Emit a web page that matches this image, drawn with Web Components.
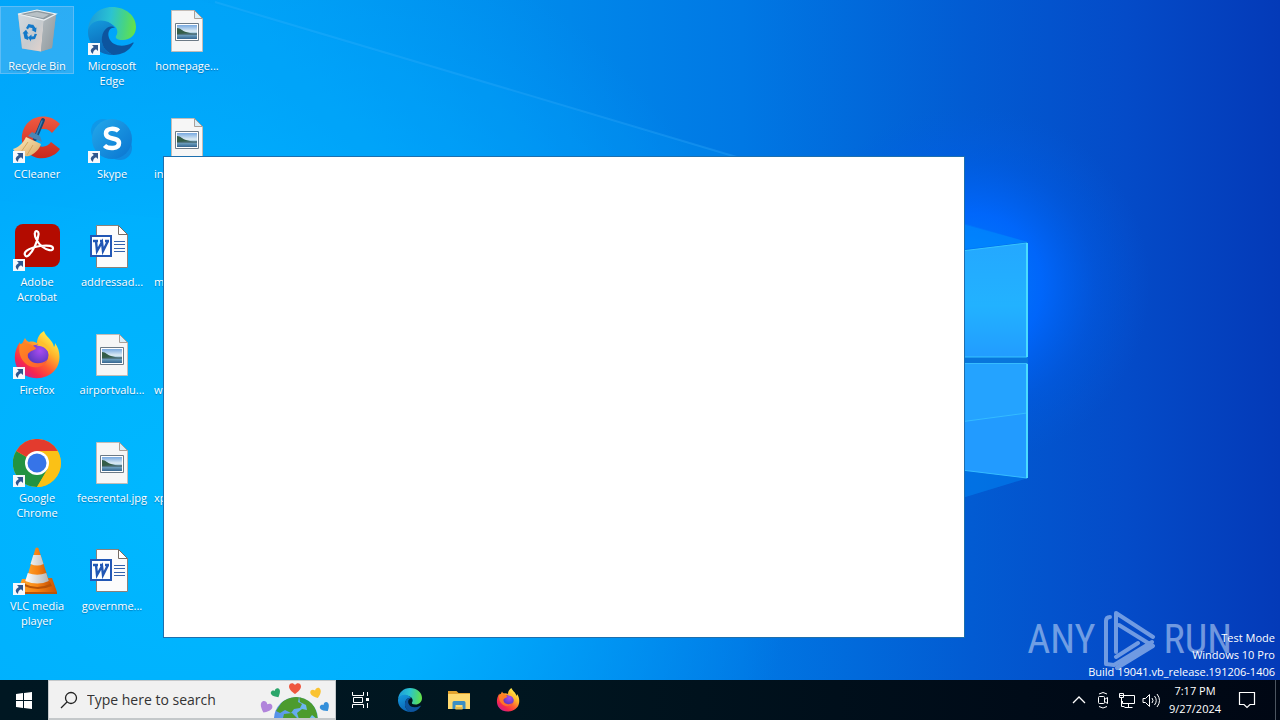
<!DOCTYPE html>
<html lang="en">
<head>
<meta charset="utf-8">
<title>Desktop</title>
<style>
	html, body {
		height: 100%;
		margin: 0;
		overflow: hidden;
		font-family: "Open Sans", "Noto Sans", sans-serif;
		font-size: 11px;
		color: #fff;
	}
</style>
</head>
<body>
<win-shell>
	<win-wallpaper slot="wallpaper"></win-wallpaper>
	<desktop-item icon="bin" selected>Recycle Bin</desktop-item>
	<desktop-item icon="ccleaner" shortcut>CCleaner</desktop-item>
	<desktop-item icon="acrobat" shortcut>Adobe Acrobat</desktop-item>
	<desktop-item icon="firefox" shortcut>Firefox</desktop-item>
	<desktop-item icon="chrome" shortcut>Google Chrome</desktop-item>
	<desktop-item icon="vlc" shortcut>VLC media player</desktop-item>
	<desktop-item icon="edge" shortcut>Microsoft Edge</desktop-item>
	<desktop-item icon="skype" shortcut>Skype</desktop-item>
	<desktop-item icon="word">addressad...</desktop-item>
	<desktop-item icon="image">airportvalu...</desktop-item>
	<desktop-item icon="image">feesrental.jpg</desktop-item>
	<desktop-item icon="word">governme...</desktop-item>
	<desktop-item icon="image">homepage...</desktop-item>
	<desktop-item icon="image" start>in</desktop-item>
	<desktop-item icon="image" start>m</desktop-item>
	<desktop-item icon="image" start>w</desktop-item>
	<desktop-item icon="image" start>xp</desktop-item>
	<app-window slot="windows"></app-window>
	<run-watermark slot="marks"></run-watermark>
	<build-info slot="marks">
		<div>Test Mode</div>
		<div>Windows 10 Pro</div>
		<div>Build 19041.vb_release.191206-1406</div>
	</build-info>
	<task-bar slot="taskbar">
		<task-button icon="start" label="Start"></task-button>
		<search-box placeholder="Type here to search"></search-box>
		<task-button icon="taskview" label="Task View"></task-button>
		<task-button icon="edge" label="Microsoft Edge"></task-button>
		<task-button icon="explorer" label="File Explorer"></task-button>
		<task-button icon="firefox" label="Firefox"></task-button>
		<task-button slot="tray" icon="chevron" label="Show hidden icons" small></task-button>
		<task-button slot="tray" icon="meet" label="Meet Now" small></task-button>
		<task-button slot="tray" icon="network" label="Network" small></task-button>
		<task-button slot="tray" icon="volume" label="Volume" small></task-button>
		<tray-clock slot="tray" time="7:17 PM" date="9/27/2024"></tray-clock>
		<task-button slot="tray" icon="notify" label="Notifications"></task-button>
	</task-bar>
</win-shell>

<script>
// every picture, drawn on a 48 unit grid for apps and a 24 unit grid for glyphs
const ART = {
	bin: `<svg viewBox="0 0 48 48">
		<defs>
			<linearGradient id="l" x2="1" y2="1"><stop stop-color="#d3dadf"/><stop offset=".55" stop-color="#c6cbcf"/><stop offset="1" stop-color="#e5d3cb"/></linearGradient>
			<linearGradient id="r" x2="1" y2="1"><stop stop-color="#b5bcc0"/><stop offset="1" stop-color="#8f989d"/></linearGradient>
		</defs>
		<path d="M5 7 24 3l19 4-4 34-11 3.500L9 41.500z" fill="#8ba0ac"/>
		<path d="M5 7 31 13l-3 31.500L9 41.500z" fill="url(#l)"/>
		<path d="M31 13 43 7l-4 34-11 3.500z" fill="url(#r)"/>
		<path d="M7 7.300 24 4l17 3-10 5z" fill="#8e999f"/>
		<path d="M11 7.500 24 5l12 2.500-6 3.500z" fill="#b8c1c6"/>
		<path d="M5 7 24 3l19 4-12 6z" fill="none" stroke="#eef2f4" stroke-width="1.200"/>
		<g fill="#1379c9">
			<path d="m13 21 2.500-4 4.500 1-1 3-3-.5-1 2z"/>
			<path d="m20 17.500 2.500 3.500 1-.6-.5 5-4.500-2.300 1.300-.8-2-3z"/>
			<path d="m24 27-2 5-4 .5v2l-3-4 3.500-3v2l2.300-.2.800-2.500z"/>
			<path d="m15 33-3.500-1.500-1-5-1-.3 3.500-3.500 2.500 4-1.500-.2.800 3 1 .6z"/>
		</g>
	</svg>`,
	ccleaner: `<svg viewBox="0 0 48 48">
		<defs>
			<linearGradient id="c" x2="0" y2="1"><stop stop-color="#ee5a42"/><stop offset="1" stop-color="#c9281c"/></linearGradient>
			<linearGradient id="b" x2="1" y2="1"><stop stop-color="#fff0c4"/><stop offset="1" stop-color="#d9a762"/></linearGradient>
		</defs>
		<path d="M47 9C35-4 12 0 9 20c-2 17 13 27 27 22 6-2 9-5 11-8l-9-7c-4 6-12 6-15 1-5-7 0-15 8-14 4 0 6 2 8 4z" fill="url(#c)"/>
		<path d="M30 5 22 24" stroke="#174a78" stroke-width="4" stroke-linecap="round"/>
		<path d="M29 6 22 23" stroke="#3f7fb4" stroke-width="1.500" stroke-linecap="round"/>
		<path d="m19 17 8 4 2 6-14-6z" fill="#4a86b4"/>
		<path d="m13 22 15 7c-2 6-7 10-12 12C9 42 3 39 0 34c6-2 10-6 13-12z" fill="url(#b)"/>
		<path d="m15 27-7 10m12-7-6 10" stroke="#d5a65e" fill="none"/>
	</svg>`,
	acrobat: `<svg viewBox="0 0 48 48">
		<rect x="2" y="1" width="45" height="43" rx="8" fill="#b30b00"/>
		<path d="M12 32c-2-4 7-8 15-9 9-1 13 0 13 2.500 0 3-6 2-11-2-5-4-8-11-7-14 .6-2.500 4-1.500 3.500 2C25 18 20 28 16 32c-2 2-3.500 1.500-4 0z" fill="none" stroke="#fff" stroke-width="2.200"/>
	</svg>`,
	firefox: `<svg viewBox="0 0 48 48">
		<defs>
			<linearGradient id="f" x1=".85" y1=".1" x2=".2" y2=".95"><stop stop-color="#fff44f"/><stop offset=".3" stop-color="#ffb52b"/><stop offset=".58" stop-color="#ff5b32"/><stop offset=".82" stop-color="#f6264f"/><stop offset="1" stop-color="#c9228d"/></linearGradient>
			<radialGradient id="p" cx=".6" cy=".3" r=".8"><stop stop-color="#a94bef"/><stop offset="1" stop-color="#4a34b5"/></radialGradient>
			<linearGradient id="o" x2="1" y2="1"><stop stop-color="#ff8a20"/><stop offset="1" stop-color="#ff5c32"/></linearGradient>
		</defs>
		<path d="M31 0c1 5 9 9 10 16 1-1 1-3 1-4 6 8 6 20 0 27C32 51 12 49 5 38 0 30 1 19 7 11c0 2 0 3 .5 4C9 13 11 9 12 7c1 2 2 3 4 4 3-1 6 0 8 1 0-5 3-10 7-12z" fill="url(#f)"/>
		<circle cx="25" cy="24" r="10.500" fill="url(#p)"/>
		<path d="M7 13c5-2 12 0 16 4 0 2-4 2-6 4-3 2-3 4-1 7 3 5 12 6 18 1-3 8-15 10-22 3-5-5-7-12-5-19z" fill="url(#o)"/>
		<path d="M23 15c6-1 12 3 14 10 1-8-5-15-12-15 1 2 1 4-2 5z" fill="#ffc02f"/>
	</svg>`,
	chrome: `<svg viewBox="0 0 48 48">
		<circle cx="24" cy="24" r="24" fill="#fbc116"/>
		<path d="M24 24 3.200 12A24 24 0 0 0 24 48l11-18z" fill="#229342"/>
		<path d="M24 24 3.200 12A24 24 0 0 1 44.800 12H24z" fill="#e33b2e"/>
		<path d="M24 12.500h20.800A24 24 0 0 1 24 48l10.500-18z" fill="#fbc116"/>
		<circle cx="24" cy="24" r="12" fill="#fff"/>
		<circle cx="24" cy="24" r="9.500" fill="#3674e8"/>
	</svg>`,
	vlc: `<svg viewBox="0 0 48 48">
		<defs><linearGradient id="v" x2="1"><stop stop-color="#ffa52e"/><stop offset=".5" stop-color="#f78212"/><stop offset="1" stop-color="#c95505"/></linearGradient>
		<linearGradient id="w" x2="1"><stop stop-color="#fff"/><stop offset="1" stop-color="#b4b4b4"/></linearGradient></defs>
		<path d="m9 32 30-1 5 14H4z" fill="url(#v)"/>
		<path d="M4 45h40v2H4z" fill="#bc5406"/>
		<path d="M13 35q11 6 24 0l2 4q-14 6-28 0z" fill="#b85206"/>
		<path d="M22.500 1.500q1.500-2 3 0L37 37q-13 6-25 0z" fill="url(#v)"/>
		<path d="M20.300 8h7.300l2.900 9q-6 3-13 0zM14.800 26q9.500 3.500 18.500 0l2.500 8q-11 5-23.500 0z" fill="url(#w)"/>
	</svg>`,
	edge: `<svg viewBox="0 0 48 48">
		<defs>
			<linearGradient id="g" x1="0" y1=".5" x2="1" y2=".6"><stop stop-color="#1c9bd8"/><stop offset=".45" stop-color="#2bc3d2"/><stop offset=".75" stop-color="#46d484"/><stop offset="1" stop-color="#67e344"/></linearGradient>
			<linearGradient id="b" x2=".3" y2="1"><stop stop-color="#149bde"/><stop offset="1" stop-color="#0b67b7"/></linearGradient>
		</defs>
		<path d="M0 23C1 9 11 0 24 0c14 0 24 9 24 20 0 8-6 13-13 13-6 0-8-2-7-4 3-4 1-10-5-12C14 13 3 15 0 23z" fill="url(#g)"/>
		<path d="M0 23c2-7 9-11 17-9 5 1 8 4 10 7-7-3-13 3-13 12 0 8 6 14 13 15C12 49-1 38 0 23z" fill="url(#b)"/>
		<path d="M27 21c-5-1-8 4-6 10 3 8 14 10 23 5 2-1 2 0 1 1-4 7-11 11-20 11-9-4-12-11-11-18 1-8 8-13 13-9z" fill="#0d559f"/>
	</svg>`,
	skype: `<svg viewBox="0 0 48 48">
		<defs><linearGradient id="s" x2="1" y2="1"><stop stop-color="#23a9eb"/><stop offset="1" stop-color="#0a74d0"/></linearGradient></defs>
		<circle cx="15" cy="16" r="12" fill="#0f98e8"/>
		<circle cx="32" cy="33" r="12" fill="#0f8ae0"/>
		<circle cx="24" cy="24" r="20" fill="url(#s)"/>
		<path d="M30.500 16c-3-3-12.500-3.500-12.500 2.500 0 7 13 3 13 9.500 0 6.500-11 6-14.500 2.500" fill="none" stroke="#fff" stroke-width="4.500"/>
	</svg>`,
	image: `<svg viewBox="0 0 48 48">
		<defs><linearGradient id="k" x2="0" y2="1"><stop stop-color="#77a9e0"/><stop offset=".45" stop-color="#dcebf4"/><stop offset=".65" stop-color="#7baec9"/><stop offset="1" stop-color="#356590"/></linearGradient></defs>
		<path d="M8.500 3.500h23l8 8v33h-31z" fill="#f6f6f6" stroke="#c3bcb7"/>
		<path d="M31.500 3.500v8h8z" fill="#d9eef8" stroke="#a99f98"/>
		<path d="M12.500 16.500h23v17h-23z" fill="#fff" stroke="#6c7a86"/>
		<path d="M14 18h20v14H14z" fill="url(#k)"/>
		<path d="M14 21c4 0 5 3 9 4l8 2-17 1z" fill="#345d48"/>
		<path d="m14 27 20-1v2H14z" fill="#537784"/>
	</svg>`,
	word: `<svg viewBox="0 0 48 48">
		<path d="M8.500 2.500h22l9 9v33h-31z" fill="#fcfcfc" stroke="#8b817a"/>
		<path d="M30.500 2.500v9h9z" fill="#fff" stroke="#766d66"/>
		<path d="M26 18.500h11m-11 3h11m-11 4h11m-11 3h11" stroke="#3563ae"/>
		<path d="M3 13h20v20H3z" fill="#fff" stroke="#2257b5" stroke-width="2"/>
		<path d="M5 18h5m2 0h3m2 0h4M8 18l1 10 5-9 1 9 5-10" fill="none" stroke="#2257b5" stroke-width="2.400"/>
	</svg>`,
	arrow: `<svg viewBox="0 0 12 12">
		<path d="M0 0h12v12H0z" fill="#f5f8fc"/>
		<path d="M4 2h6v6L8 6.300Q5 7.500 5 11 0 7.500 5.800 4z" fill="#2f568e"/>
	</svg>`,
	explorer: `<svg viewBox="0 0 48 48">
		<path d="M2 6h17l4 4h23v32H2z" fill="#e4a52f"/>
		<path d="M2 12h44v30H2z" fill="#ffda70"/>
		<path d="M11 42V29q0-3 3-3h20q3 0 3 3v13h-6v-8H17v8z" fill="#3c8fc4"/>
		<path d="M17 38h14v5H17z" fill="#e9bd4c"/>
	</svg>`,
	start: `<svg viewBox="0 0 24 24">
		<path d="m4 6 7-1v7H4zm8-1 8-1v8h-8zM4 13h7v7l-7-1zm8 0h8v8l-8-1z" fill="#fff"/>
	</svg>`,
	taskview: `<svg viewBox="0 0 24 24" fill="none" stroke="#fff">
		<path d="M3.500 4v3.500h11V4M3.500 20v-3.500h11V20M4.500 9.500h9v5h-9zM18.500 4v4m0 7v5"/>
		<path d="M17 10h3v3h-3z" fill="#fff" stroke="none"/>
	</svg>`,
	chevron: `<svg viewBox="0 0 24 24"><path d="m6 15 6-6 6 6" fill="none" stroke="#fff" stroke-width="1.300"/></svg>`,
	meet: `<svg viewBox="0 0 24 24" fill="none" stroke="#fff">
		<rect x="7.500" y="8.500" width="6" height="7" rx="1"/>
		<path d="m13.500 11.500 3-2v6l-3-2M8 6q4-3 8 0M8 18.500q4 3 8 0"/>
	</svg>`,
	network: `<svg viewBox="0 0 24 24" fill="none" stroke="#fff">
		<path d="M9 7.500h10.500v8h-12V13M13.500 16v3M9.500 19.500h8M4.500 5.500h4v4h-4zM6.500 10v8.500h3M5 7.500h3"/>
	</svg>`,
	volume: `<svg viewBox="0 0 24 24" fill="none" stroke="#fff">
		<path d="M4 10.500h2.500l4-4v12l-4-4H4zM13 10q2 2.500 0 5M15.500 8q3.500 4.500 0 9M18 6q5 6.500 0 13"/>
	</svg>`,
	notify: `<svg viewBox="0 0 24 24"><path d="M4.500 4.500h15v12H15l-3 3-3-3H4.500z" fill="none" stroke="#fff" stroke-width="1.200"/></svg>`,
	search: `<svg viewBox="0 0 24 24" fill="none" stroke="#222" stroke-width="1.300"><circle cx="14" cy="10" r="5.500"/><path d="m10 14-6 6"/></svg>`,
	earth: `<svg viewBox="10 0 76 38">
		<defs>
			<clipPath id="e"><circle cx="47" cy="39" r="22"/></clipPath>
			<linearGradient id="n" x2="1"><stop stop-color="#548fe8"/><stop offset="1" stop-color="#79c8f4"/></linearGradient>
			<path id="h" d="M0 6C-3 4-6 1-6-1.500-6-5-2-6 0-3 2-6 6-5 6-1.500 6 1 3 4 0 6z"/>
		</defs>
		<circle cx="47" cy="39" r="22" fill="url(#n)"/>
		<g clip-path="url(#e)" fill="#4c9b2e">
			<path d="M33 22q8-6 17-5l-1 5 4 2-2 4-6 1-3 4-6-3-5 3-4-2z"/>
			<path d="M50 16q17 3 19 24l-6-5-3 4H50l-2-6 5-4 5 1-1-5-6-3z"/>
			<path d="m35 34 8-1 5 5H34z"/>
		</g>
		<g>
			<use href="#h" transform="translate(17 27) rotate(25)" fill="#b184db"/>
			<use href="#h" transform="translate(27 13) rotate(-30) scale(.8)" fill="#2ba56a"/>
			<use href="#h" transform="translate(46 8)" fill="#ef573f"/>
			<use href="#h" transform="translate(67 13) rotate(-20) scale(.9)" fill="#fac331"/>
			<use href="#h" transform="translate(76 27) rotate(-35) scale(.8)" fill="#348fda"/>
		</g>
	</svg>`,
};

class BaseElement extends HTMLElement {
	constructor() {
		super();
		this.attachShadow({mode: "open"});
	}
	connectedCallback() {
		this.shadowRoot.innerHTML = this.render();
	}
	attr(name) {
		return this.getAttribute(name) || "";
	}
}

class AppIcon extends BaseElement {
	render() {
		return `<style>
			:host { display: block; width: 48px; height: 48px; }
			svg { display: block; width: 100%; height: 100%; }
		</style>${ART[this.attr("name")]}`;
	}
}

class WinShell extends BaseElement {
	render() {
		return `<style>
			:host { display: flex; flex-direction: column; height: 100%; }
			main { position: relative; flex: 1; min-height: 0; overflow: hidden; }
			.icons {
				position: relative;
				display: grid;
				grid-auto-flow: column;
				grid-template-rows: repeat(6, 108px);
				grid-auto-columns: 75px;
				padding-top: 6px;
			}
		</style>
		<main>
			<slot name="wallpaper"></slot>
			<div class="icons"><slot></slot></div>
			<slot name="marks"></slot>
			<slot name="windows"></slot>
		</main>
		<slot name="taskbar"></slot>`;
	}
}

class WinWallpaper extends BaseElement {
	render() {
		return `<style>
			:host { position: absolute; inset: 0; }
			svg { display: block; width: 100%; height: 100%; }
		</style>
		<svg viewBox="0 0 1280 680" preserveAspectRatio="none">
			<defs>
				<linearGradient id="base">
					<stop stop-color="#00a6f8"/>
					<stop offset=".2" stop-color="#00a0f4"/>
					<stop offset=".4" stop-color="#008cec"/>
					<stop offset=".58" stop-color="#0078e4"/>
					<stop offset=".76" stop-color="#025bd2"/>
					<stop offset=".88" stop-color="#044bc8"/>
					<stop offset="1" stop-color="#043ab8"/>
				</linearGradient>
				<radialGradient id="cyan" gradientUnits="userSpaceOnUse" cx="180" cy="500" r="620">
					<stop stop-color="#00b8ff"/>
					<stop offset=".45" stop-color="#00b2ff" stop-opacity=".9"/>
					<stop offset="1" stop-color="#00a0ff" stop-opacity="0"/>
				</radialGradient>
				<radialGradient id="glow" gradientUnits="userSpaceOnUse" cx="970" cy="285" r="180">
					<stop stop-color="#0080ff"/>
					<stop offset=".4" stop-color="#0068ff" stop-opacity=".9"/>
					<stop offset=".7" stop-color="#005ff0" stop-opacity=".35"/>
					<stop offset="1" stop-color="#005ce0" stop-opacity="0"/>
				</radialGradient>
				<linearGradient id="pane" x2="0" y2="1">
					<stop stop-color="#24a8ff"/>
					<stop offset=".55" stop-color="#22b2ff"/>
					<stop offset="1" stop-color="#229cff"/>
				</linearGradient>
			</defs>
			<rect width="1280" height="680" fill="url(#base)"/>
			<rect width="1280" height="680" fill="url(#cyan)"/>
			<rect width="1280" height="680" fill="url(#glow)"/>
			<path d="M200 0 1028 242 900 300 0 200V0z" fill="#00a8ff" opacity=".14"/>
			<path d="M215 2 740 158" stroke="#42b8ff" stroke-width="2" opacity=".25"/>
			<path d="m900 207 128 35-128 14zM900 462l128 16-128 39z" fill="#0094ff" opacity=".4"/>
			<path d="M900 258 1028 242v236L900 462z" fill="#0876dc"/>
			<path d="M900 258.500 1027 243v114H900z" fill="url(#pane)" stroke="#35c4ff"/>
			<path d="M900 363.500h127V478L900 462.500z" fill="#229bff" stroke="#35bcff"/>
			<path d="M900 364h126v49l-126 17z" fill="#25acff" opacity=".5"/>
			<path d="m900 430 127-17" stroke="#34bcff"/>
			<path d="M1027 243v114m0 7v114" stroke="#4adcff" stroke-width="2"/>
		</svg>`;
	}
}

class DesktopItem extends BaseElement {
	render() {
		return `<style>
			:host { display: block; }
			.item {
				box-sizing: border-box;
				display: flex;
				flex-direction: column;
				align-items: center;
				gap: 3px;
				width: 74px;
				border: 1px solid transparent;
			}
			:host([selected]) .item { border-color: #5cbcf6; background: rgba(125, 190, 235, .35); }
			.picture { position: relative; }
			.badge { position: absolute; left: 0; bottom: 0; width: 12px; height: 12px; }
			.label {
				line-height: 15px;
				text-align: center;
				text-shadow: 0 1px 1px rgba(0, 40, 90, .4);
			}
			:host([start]) .label { align-self: flex-start; padding-left: 3px; }
		</style>
		<div class="item">
			<div class="picture">
				<app-icon name="${this.attr("icon")}"></app-icon>
				${this.hasAttribute("shortcut") ? '<app-icon class="badge" name="arrow"></app-icon>' : ""}
			</div>
			<div class="label"><slot></slot></div>
		</div>`;
	}
}

class AppWindow extends BaseElement {
	render() {
		return `<style>
			:host {
				box-sizing: border-box;
				position: absolute;
				left: 163px;
				top: 156px;
				width: 802px;
				height: 482px;
				border: 1px solid #1d6fae;
				background: #fff;
			}
		</style><slot></slot>`;
	}
}

class RunWatermark extends BaseElement {
	render() {
		return `<style>
			:host {
				position: absolute;
				right: 48px;
				bottom: 9px;
				display: flex;
				align-items: center;
				gap: 6px;
				font: 400 40px/60px "Roboto Condensed", "Open Sans Condensed", "Liberation Sans Narrow", "Roboto", sans-serif;
				color: #b8d0f4;
				opacity: .6;
			}
			svg { display: block; width: 56px; height: 62px; }
		</style>
		<span>ANY</span>
		<svg viewBox="0 0 56 62" fill="none" stroke="currentColor" stroke-width="4" stroke-linejoin="round" stroke-linecap="round">
			<path d="M8 8q-4 0-4 4v43l8 1 38-23M14 43V4l37 24M17 16l34 21-36 22M14 48l22-14"/>
		</svg>
		<span>RUN</span>`;
	}
}

class BuildInfo extends BaseElement {
	render() {
		return `<style>
			:host {
				position: absolute;
				right: 5px;
				bottom: 0;
				line-height: 17px;
				text-align: right;
			}
		</style><slot></slot>`;
	}
}

class TaskBar extends BaseElement {
	render() {
		return `<style>
			:host {
				display: flex;
				height: 40px;
				background: linear-gradient(90deg, #001722, #001620 40%, #000b18 80%, #000714);
			}
			.tray { display: flex; margin-left: auto; }
			.peek {
				width: 5px;
				margin-left: 8px;
				padding: 0;
				border: 0;
				border-left: 1px solid #4c5560;
				background: none;
			}
		</style>
		<slot></slot>
		<div class="tray">
			<slot name="tray"></slot>
			<button class="peek" aria-label="Show desktop"></button>
		</div>`;
	}
}

class TaskButton extends BaseElement {
	render() {
		return `<style>
			:host { display: block; width: 49px; }
			:host([icon="start"]) { width: 48px; }
			:host([icon="notify"]) { width: 40px; }
			:host([small]) { width: 24px; }
			button {
				display: grid;
				place-items: center;
				width: 100%;
				height: 100%;
				padding: 0;
				border: 0;
				background: none;
			}
			app-icon { width: 24px; height: 24px; }
		</style>
		<button aria-label="${this.attr("label")}"><app-icon name="${this.attr("icon")}"></app-icon></button>`;
	}
}

class SearchBox extends BaseElement {
	render() {
		return `<style>
			:host {
				box-sizing: border-box;
				display: flex;
				align-items: center;
				width: 288px;
				padding-left: 8px;
				border: 1px solid #c4c8ca;
				border-bottom-width: 2px;
				background: #f1f1f1;
			}
			.glass { width: 24px; height: 24px; }
			.earth { width: 76px; height: 38px; align-self: flex-end; }
			input {
				flex: 1;
				min-width: 0;
				padding: 0 0 0 6px;
				border: 0;
				outline: 0;
				background: none;
				font: 14px/20px "Open Sans", "Noto Sans", sans-serif;
				color: #222;
			}
			input::placeholder { color: #333; opacity: 1; }
		</style>
		<app-icon class="glass" name="search"></app-icon>
		<input type="text" aria-label="Search" placeholder="${this.attr("placeholder")}">
		<app-icon class="earth" name="earth"></app-icon>`;
	}
}

class TrayClock extends BaseElement {
	render() {
		return `<style>
			:host { display: block; width: 64px; padding-top: 2px; line-height: 18px; text-align: center; }
		</style>
		<div>${this.attr("time")}</div>
		<div>${this.attr("date")}</div>`;
	}
}

customElements.define("app-icon", AppIcon);
customElements.define("win-shell", WinShell);
customElements.define("win-wallpaper", WinWallpaper);
customElements.define("desktop-item", DesktopItem);
customElements.define("app-window", AppWindow);
customElements.define("run-watermark", RunWatermark);
customElements.define("build-info", BuildInfo);
customElements.define("task-bar", TaskBar);
customElements.define("task-button", TaskButton);
customElements.define("search-box", SearchBox);
customElements.define("tray-clock", TrayClock);
</script>
</body>
</html>
